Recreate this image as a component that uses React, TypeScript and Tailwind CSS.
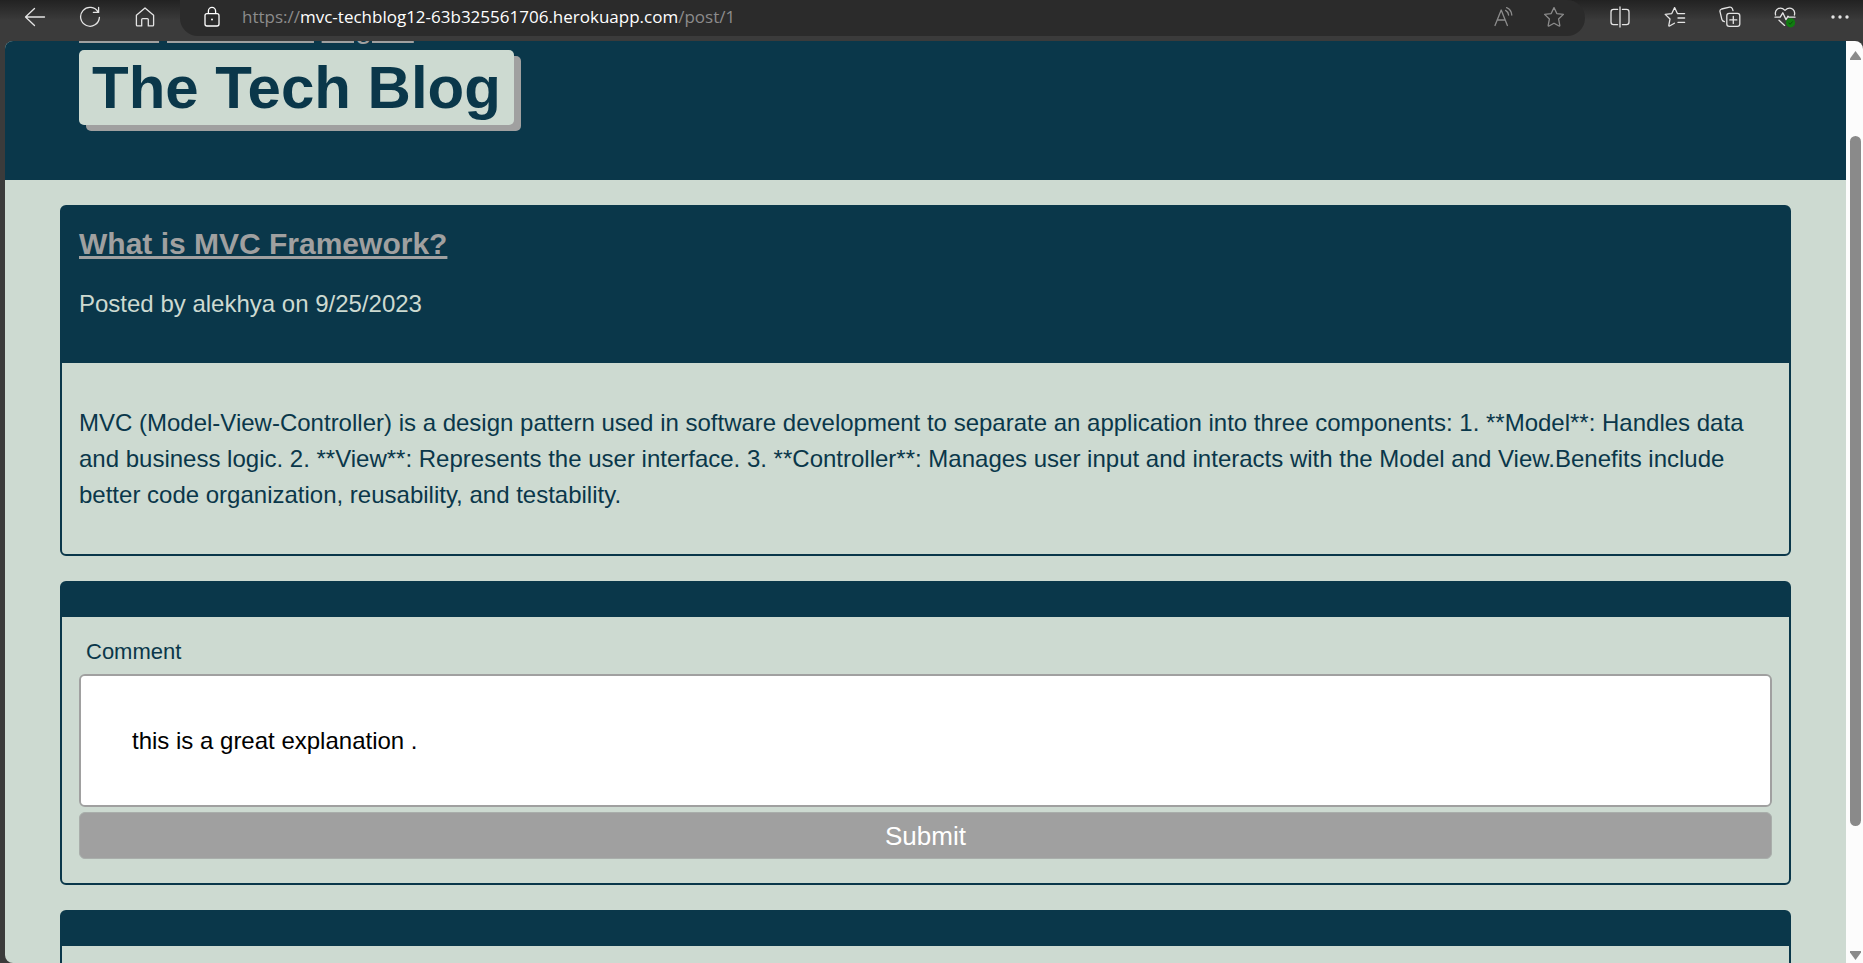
import type { ReactNode } from 'react'

function Icon({ children, className = 'text-[#e4e4e4]' }: { children: ReactNode; className?: string }) {
  return (
    <svg
      viewBox="0 0 22 22"
      className={`size-[22px] ${className}`}
      fill="none"
      stroke="currentColor"
      strokeWidth="1.3"
      strokeLinecap="round"
      strokeLinejoin="round"
      aria-hidden="true"
    >
      {children}
    </svg>
  )
}

function ToolButton({ label, children }: { label: string; children: ReactNode }) {
  return (
    <button type="button" aria-label={label} className="flex size-[22px] shrink-0 items-center justify-center">
      {children}
    </button>
  )
}

const STAR = 'M11 1.6 13.8 7.6 20.4 8.4 15.6 13 16.8 19.4Q16.8 20.3 16 20L11 17.2 6 20Q5.2 20.3 5.2 19.4L6.4 13 1.6 8.4 8.2 7.6Z'

function BrowserBar() {
  return (
    <div className="flex h-[41px] shrink-0 items-start bg-linear-to-b from-[#222222] to-[#3b3b3b] to-50% pr-3 pl-6">
      <div className="flex h-[33px] w-[156px] items-center gap-[33px]">
        <ToolButton label="Back">
          <Icon>
            <path d="M20.5 11H1.5M10.5 2.5 1.5 11l9 8.5" />
          </Icon>
        </ToolButton>
        <ToolButton label="Refresh">
          <Icon>
            <path d="M19.2 6.2A9.4 9.4 0 1 0 20.4 11.4M19.6 1.4v5h-5.2" />
          </Icon>
        </ToolButton>
        <ToolButton label="Home">
          <Icon>
            <path d="M2.4 9.3 11 2l8.6 7.3v9.6q0 1-1 1h-4.3v-6.3q0-1-1-1H8.7q-1 0-1 1v6.3H3.4q-1 0-1-1Z" />
          </Icon>
        </ToolButton>
      </div>
      <div className="flex h-9 min-w-0 flex-1 items-center rounded-r-full rounded-bl-full bg-[#2b2b2b] pr-5 pb-[3px] pl-[21px]">
        <Icon className="shrink-0 text-white">
          <rect x="4" y="7.6" width="14" height="12.4" rx="2" />
          <path d="M7.4 7.4V5a3.6 3.6 0 0 1 7.2 0v2.4" />
          <circle cx="11" cy="13.6" r="1" fill="currentColor" stroke="none" />
        </Icon>
        <p className="min-w-0 flex-1 truncate pl-[19px] font-['Open_Sans','Noto_Sans',sans-serif] text-[17px] leading-6 text-[#8c8c8c]">
          https://<span className="text-white">mvc-techblog12-63b325561706.herokuapp.com</span>/post/1
        </p>
        <div className="flex gap-7">
          <ToolButton label="Read aloud">
            <Icon className="text-[#8c8c8c]">
              <path d="M2 19.5 8.2 4 14.4 19.5M4.2 14h8M12.6 4.4q2.6 1.4 3 4.6M13.6 1.6q4.8 2 5.2 7.4" />
            </Icon>
          </ToolButton>
          <ToolButton label="Add to favorites">
            <Icon className="text-[#8c8c8c]">
              <path d={STAR} />
            </Icon>
          </ToolButton>
        </div>
      </div>
      <div className="flex h-[33px] items-center gap-[33px] pl-6">
        <ToolButton label="Split screen">
          <Icon>
            <path d="M8.6 3.4H4.5Q2 3.4 2 6v10q0 2.6 2.5 2.6h4.1M13.4 3.4h4.1Q20 3.4 20 6v10q0 2.6-2.5 2.6h-4.1M11 1v20" />
          </Icon>
        </ToolButton>
        <ToolButton label="Favorites">
          <Icon>
            <path d="M13.4 7.6 10.6 1.6 7.8 7.6 1.2 8.4 6 13 4.8 19.4Q4.8 20.3 5.6 20L10.4 17.2M13.4 7.6H20.6M14 12h6.6M14 16.4h6.6" />
          </Icon>
        </ToolButton>
        <ToolButton label="Collections">
          <Icon>
            <rect x="7.8" y="7.4" width="13" height="13" rx="2.4" />
            <path d="M14.3 10.4v7M10.8 13.9h7M5.4 15.6Q3.4 15.2 2.8 13.2L1 5.6Q.6 3.6 2.6 3L10.6 1.2Q12.6.9 13.4 2.8L14 4.6" />
          </Icon>
        </ToolButton>
        <ToolButton label="Browser essentials">
          <Icon>
            <path d="M1.6 9Q.6 5.4 3.2 3.2 7.2.6 11 4.4 14.8.6 18.8 3.2 21.4 5.4 20.4 9M1 11.2H6.2L8.8 6.8 12 13.6 14 10.2 15 11.2H21M5 14.2 10.6 19.4" />
            <circle cx="16.6" cy="16.8" r="4.6" fill="#107c10" stroke="none" />
            <path d="m14.8 17 1.3 1.3 2.4-2.6" stroke="#0a4a0a" strokeWidth="1" />
          </Icon>
        </ToolButton>
        <ToolButton label="Settings and more">
          <Icon>
            <g fill="currentColor" stroke="none">
              <circle cx="4" cy="11" r="1.7" />
              <circle cx="11" cy="11" r="1.7" />
              <circle cx="18" cy="11" r="1.7" />
            </g>
          </Icon>
        </ToolButton>
      </div>
    </div>
  )
}

function ScrollBar() {
  return (
    <div className="flex w-[17px] shrink-0 flex-col items-center rounded-tr-lg bg-[#fcfcfc] pt-[10px] pb-[3px] pl-[2px]" aria-hidden="true">
      <svg viewBox="0 0 11 9" className="h-[9px] w-[11px] shrink-0">
        <path d="M5.5 0 11 7.5V9H0V7.5Z" fill="#8a8a8a" />
      </svg>
      <div className="flex w-[11px] flex-1 flex-col pt-[76px] pb-[125px]">
        <div className="flex-1 rounded-full bg-[#8a8a8a]" />
      </div>
      <svg viewBox="0 0 11 9" className="h-[9px] w-[11px] shrink-0">
        <path d="M5.5 9 0 1.5V0H11V1.5Z" fill="#8a8a8a" />
      </svg>
    </div>
  )
}

function Card({ header, children }: { header?: ReactNode; children?: ReactNode }) {
  return (
    <section className="shrink-0 rounded-[6px] border-2 border-[#0a374a] text-[#0a374a]">
      <div className="min-h-[34px] bg-[#0a374a] px-[17px]">{header}</div>
      {children}
    </section>
  )
}

export default function App() {
  return (
    <div className="flex h-screen flex-col overflow-hidden bg-[#3b3b3b] font-['Liberation_Sans',Arial,sans-serif]">
      <BrowserBar />
      <div className="flex min-h-0 flex-1 pl-[5px]">
        <div className="flex min-w-0 flex-1 flex-col overflow-hidden rounded-l-lg bg-[#cddad1]">
          <header className="flex h-[139px] shrink-0 flex-col items-start justify-end overflow-hidden bg-[#0a374a] px-[74px] pb-[55px]">
            <nav className="flex gap-2 text-[30px] leading-[45px] text-[#a0a0a0] underline">
              <a href="#home">Home</a>
              <a href="#dashboard">Dashboard</a>
              <a href="#logout">Logout</a>
            </nav>
            <h1 className="rounded-[5px] bg-[#cddad1] px-[13px] text-[60px] leading-[75px] font-bold text-[#0a374a] shadow-[7px_6px_0_#a0a0a0]">
              The Tech Blog
            </h1>
          </header>
          <main className="flex flex-col gap-[25px] px-[55px] pt-[25px]">
            <Card
              header={
                <div className="pt-[14px] pb-[41px]">
                  <h2 className="text-[30px] leading-[45px] font-bold">
                    <a href="#post" className="text-[#a0a0a0] underline">
                      What is MVC Framework?
                    </a>
                  </h2>
                  <p className="mt-5 text-2xl leading-9 text-[#cddad1]">Posted by alekhya on 9/25/2023</p>
                </div>
              }
            >
              <p className="px-[17px] pt-[42px] pb-[41px] text-2xl leading-9">
                MVC (Model-View-Controller) is a design pattern used in software development to separate an application
                into three components: 1. **Model**: Handles data and business logic. 2. **View**: Represents the user
                interface. 3. **Controller**: Manages user input and interacts with the Model and View.Benefits include
                better code organization, reusability, and testability.
              </p>
            </Card>
            <Card>
              <form className="flex flex-col px-[17px] pt-[18px] pb-6" onSubmit={(e) => e.preventDefault()}>
                <label htmlFor="comment" className="mb-[6px] pl-[7px] text-[22px] leading-[33px]">
                  Comment
                </label>
                <textarea
                  id="comment"
                  rows={1}
                  defaultValue="this is a great explanation ."
                  className="h-[133px] resize-none rounded-[6px] border-2 border-[#a0a0a0] bg-white px-[51px] py-[47px] text-2xl leading-9 text-black outline-none"
                />
                <button type="submit" className="mt-[5px] h-[47px] rounded-[6px] border border-[#a9aeab] bg-[#a0a0a0] text-[26px] leading-9 text-white">
                  Submit
                </button>
              </form>
            </Card>
            <Card>
              <div className="h-20" />
            </Card>
          </main>
        </div>
        <ScrollBar />
      </div>
    </div>
  )
}
